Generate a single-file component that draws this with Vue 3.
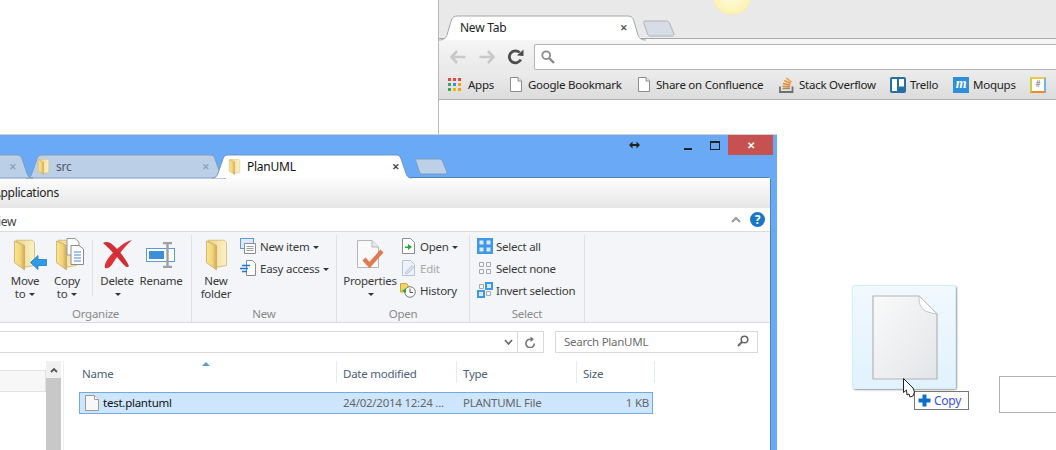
<script setup>
const bookmarks = [
  { label: 'Apps', icon: 'apps', width: 62 },
  { label: 'Google Bookmark', icon: 'page', width: 128 },
  { label: 'Share on Confluence', icon: 'page', width: 141 },
  { label: 'Stack Overflow', icon: 'so', width: 111 },
  { label: 'Trello', icon: 'trello', width: 63 },
  { label: 'Moqups', icon: 'moqups', width: 77 },
  { label: '', icon: 'hash', width: 20 }
]

const appColors = ['#e8453c', '#e8453c', '#e8453c', '#3ba55c', '#3b8be7', '#f4a400', '#3ba55c', '#f4b400', '#f4a400']

const columns = [
  { label: 'Name', width: 254 },
  { label: 'Date modified', width: 120 },
  { label: 'Type', width: 120 },
  { label: 'Size', width: 79 }
]
</script>

<template>
  <div class="desktop">
    <svg class="defs" width="0" height="0">
      <defs>
        <linearGradient id="folderBack" x1="0" y1="0" x2="1" y2="0">
          <stop offset="0" stop-color="#e9cf84" />
          <stop offset="0.5" stop-color="#f4e3a6" />
          <stop offset="1" stop-color="#fbf1c6" />
        </linearGradient>
        <linearGradient id="folderFront" x1="0" y1="0" x2="1" y2="0">
          <stop offset="0" stop-color="#fbe691" />
          <stop offset="0.6" stop-color="#f2d27a" />
          <stop offset="1" stop-color="#cfa95a" />
        </linearGradient>
        <linearGradient id="ghostPage" x1="0" y1="0" x2="1" y2="1">
          <stop offset="0" stop-color="#fafafa" />
          <stop offset="1" stop-color="#e2e5e8" />
        </linearGradient>
        <symbol id="folder" viewBox="0 0 22 32">
          <path d="M2 0.500 H19 L21.500 3 V27 L10 29 Z" fill="url(#folderBack)" stroke="#cdb26a" stroke-width="0.800" />
          <path d="M0.500 1.500 L11 6 V31.500 L0.500 24 Z" fill="url(#folderFront)" stroke="#c8a75c" stroke-width="0.800" />
        </symbol>
        <symbol id="page" viewBox="0 0 12 15">
          <path d="M0.500 0.500 H8 L11.500 4 V14.500 H0.500 Z" fill="#fff" stroke="#8d8d8d" />
          <path d="M8 0.500 V4 H11.500" fill="#eee" stroke="#8d8d8d" />
        </symbol>
      </defs>
    </svg>

    <section class="chrome">
      <div class="chrome-top">
        <div class="chrome-tab">
          <svg class="tab-shape" viewBox="0 0 200 25" preserveAspectRatio="none">
            <path d="M0 25 C5 25 7 23 8 19 L12 5 C13 2 15 1 18 1 H182 C185 1 187 2 188 5 L192 19 C193 23 195 25 200 25" fill="#fff" stroke="#a5a5a5" vector-effect="non-scaling-stroke" />
          </svg>
          <span class="chrome-tab-title">New Tab</span>
          <span class="chrome-close">✕</span>
        </div>
        <svg class="chrome-newtab" width="32" height="17" viewBox="0 0 32 17">
          <path d="M1.500 1 H23 C25 1 26 2 26.500 3 L31 14 C31 15.500 30 16 29 16 H7 C6 16 5 15 4.500 14 L0.800 3 C0.500 2 1 1 1.500 1 Z" fill="#d6dde6" stroke="#b2b2b2" />
        </svg>
      </div>
      <div class="chrome-toolbar">
        <svg class="nav" width="16" height="14" viewBox="0 0 16 14"><path d="M7 1 L1.500 7 L7 13 M2 7 H15.500" fill="none" stroke="#c9c9c9" stroke-width="2.600" /></svg>
        <svg class="nav" width="16" height="14" viewBox="0 0 16 14"><path d="M9 1 L14.500 7 L9 13 M14 7 H0.500" fill="none" stroke="#c9c9c9" stroke-width="2.600" /></svg>
        <svg class="nav" width="16" height="16" viewBox="0 0 16 16"><path d="M12.800 10.500 A6 6 0 1 1 11.600 3.600" fill="none" stroke="#4c4c4c" stroke-width="2.800" /><path d="M9 6.500 L15.500 7 V0.500 Z" fill="#4c4c4c" /></svg>
        <div class="omnibox">
          <svg width="14" height="14" viewBox="0 0 14 14"><circle cx="5.200" cy="5.200" r="3.900" fill="none" stroke="#8a8a8a" stroke-width="1.800" /><path d="M8 8 L13 13" stroke="#8a8a8a" stroke-width="2.400" /></svg>
        </div>
      </div>
      <div class="bookmarks">
        <div v-for="b in bookmarks" :key="b.icon + b.label" class="bookmark" :style="{ width: b.width + 'px' }">
          <span class="bm-icon" :class="{ 'bm-page': b.icon === 'page' }">
            <span v-if="b.icon === 'apps'" class="apps-grid">
              <i v-for="(c, i) in appColors" :key="i" :style="{ background: c }"></i>
            </span>
            <svg v-else-if="b.icon === 'page'" width="12" height="15"><use href="#page" /></svg>
            <svg v-else-if="b.icon === 'so'" width="15" height="16" viewBox="0 0 15 16">
              <path d="M1 9.500 V15 H13.500 V9.500" fill="none" stroke="#6f6f6f" stroke-width="1.800" />
              <path d="M3.500 11.500 H11" stroke="#a98a5f" stroke-width="1.400" />
              <path d="M3.600 9.200 L11 10" stroke="#d98a3c" stroke-width="1.400" />
              <path d="M4 6.500 L11.200 8.200" stroke="#e8812a" stroke-width="1.400" />
              <path d="M5.200 3.600 L11.800 6.500" stroke="#f08a24" stroke-width="1.400" />
              <path d="M7.200 1 L12.500 5" stroke="#f39a2c" stroke-width="1.400" />
            </svg>
            <svg v-else-if="b.icon === 'trello'" width="16" height="16" viewBox="0 0 16 16">
              <rect width="16" height="16" rx="2" fill="#26709f" />
              <rect x="2" y="2" width="5" height="12" fill="#fff" />
              <rect x="9" y="2" width="5" height="7.500" fill="#fff" />
            </svg>
            <span v-else-if="b.icon === 'moqups'" class="moqups">m</span>
            <span v-else class="hash">#</span>
          </span>
          <span v-if="b.label" class="bm-label">{{ b.label }}</span>
        </div>
      </div>
    </section>

    <div class="sun"></div>

    <section class="explorer">
      <div class="ex-tabs">
        <div class="ex-tab behind first">
          <svg class="tab-shape" viewBox="0 0 200 24" preserveAspectRatio="none">
            <path d="M0 24 C4 24 5 22 6 19 L11 4 C12 1 13 0 16 0 H184 C187 0 188 1 189 4 L194 19 C195 22 196 24 200 24 Z" fill="#bbcfe6" stroke="#7f9cc0" vector-effect="non-scaling-stroke" />
          </svg>
          <span class="ex-close">✕</span>
        </div>
        <div class="ex-tab behind second">
          <svg class="tab-shape" viewBox="0 0 200 24" preserveAspectRatio="none">
            <path d="M0 24 C4 24 5 22 6 19 L11 4 C12 1 13 0 16 0 H184 C187 0 188 1 189 4 L194 19 C195 22 196 24 200 24 Z" fill="#bbcfe6" stroke="#7f9cc0" vector-effect="non-scaling-stroke" />
          </svg>
          <svg class="tab-folder" width="13" height="16"><use href="#folder" /></svg>
          <span class="ex-title">src</span>
          <span class="ex-close">✕</span>
        </div>
        <div class="ex-tab active">
          <svg class="tab-shape" viewBox="0 0 200 24" preserveAspectRatio="none">
            <path d="M0 24 C4 24 5 22 6 19 L11 4 C12 1 13 0 16 0 H184 C187 0 188 1 189 4 L194 19 C195 22 196 24 200 24" fill="#fff" stroke="#6a97cc" vector-effect="non-scaling-stroke" />
          </svg>
          <svg class="tab-folder" width="13" height="16"><use href="#folder" /></svg>
          <span class="ex-title">PlanUML</span>
          <span class="ex-close">✕</span>
        </div>
        <svg class="ex-newtab" width="33" height="17" viewBox="0 0 33 17">
          <path d="M1.500 1 H24 C26 1 27 2 27.500 3 L32 14 C32 15.500 31 16 30 16 H7 C6 16 5 15 4.500 14 L0.800 3 C0.500 2 1 1 1.500 1 Z" fill="#bcd0e8" stroke="#7f9cc0" />
        </svg>
        <div class="ex-controls">
          <svg class="resize" width="11" height="8" viewBox="0 0 11 8"><path d="M0 4 L3.500 0.500 V3 H7.500 V0.500 L11 4 L7.500 7.500 V5 H3.500 V7.500 Z" fill="#222" /></svg>
          <span class="min"></span>
          <span class="max"></span>
          <span class="close">✕</span>
        </div>
      </div>

      <div class="ex-inner">
        <div class="menu-bar">Applications</div>
        <div class="view-row">
          <span class="view-label">View</span>
          <svg class="caret-up" width="10" height="7" viewBox="0 0 10 7"><path d="M1 6 L5 2 L9 6" fill="none" stroke="#9a9a9a" stroke-width="2" /></svg>
          <span class="help">?</span>
        </div>

        <div class="ribbon">
          <div class="group organize">
            <div class="group-body">
              <div class="big w42">
                <span class="big-icon">
                  <svg class="big-folder" width="21" height="32"><use href="#folder" /></svg>
                  <svg class="over-arrow" width="17" height="15" viewBox="0 0 17 15"><path d="M0.500 7.500 L8 0.500 V4.500 H16.500 V10.500 H8 V14.500 Z" fill="#2e9bea" stroke="#1c78c4" stroke-width="0.800" /></svg>
                </span>
                <span>Move</span>
                <span>to <i class="arrow"></i></span>
              </div>
              <div class="big w42">
                <span class="big-icon">
                  <svg class="big-folder" width="21" height="32"><use href="#folder" /></svg>
                  <svg class="over-doc" width="18" height="27" viewBox="0 0 18 27">
                    <path d="M1 0.500 H9 L13 4 V17 H1 Z" fill="#fff" stroke="#9a9a9a" />
                    <path d="M5 7.500 H13 L17.500 11 V26.500 H5 Z" fill="#fff" stroke="#8a8a8a" />
                    <path d="M8 14 H15 M8 17 H15 M8 20 H15 M8 23 H15" stroke="#4a86c8" />
                  </svg>
                </span>
                <span>Copy</span>
                <span>to <i class="arrow"></i></span>
              </div>
              <div class="sep"></div>
              <div class="big w42">
                <span class="big-icon">
                  <svg width="30" height="29" viewBox="0 0 30 29">
                    <path d="M30 0 C22 2 14 9 8 16 C4 21 2 25 3 28 C7 29 9 26 11 23 C15 17 22 7 30 0 Z" fill="#d8343a" />
                    <path d="M1 3 C4 1 8 2 11 5 C16 10 23 17 27 26 C26 28 24 27 22 25 C16 18 8 9 1 3 Z" fill="#cf2f35" />
                  </svg>
                </span>
                <span>Delete</span>
                <span><i class="arrow"></i></span>
              </div>
              <div class="big w46">
                <span class="big-icon">
                  <svg width="30" height="26" viewBox="0 0 30 26">
                    <rect x="0.500" y="6.500" width="28" height="13" fill="#fff" stroke="#5a9bd5" />
                    <rect x="3" y="9" width="15" height="8" fill="#3d8fdc" />
                    <path d="M17 1 H26 M17 25 H26 M21.500 1 V25" stroke="#a0a0a0" stroke-width="2.400" fill="none" />
                  </svg>
                </span>
                <span>Rename</span>
              </div>
            </div>
            <div class="group-label">Organize</div>
          </div>

          <div class="group new">
            <div class="group-body">
              <div class="big w48">
                <span class="big-icon">
                  <svg width="21" height="32"><use href="#folder" /></svg>
                </span>
                <span>New</span>
                <span>folder</span>
              </div>
              <div class="small-col">
                <div class="small">
                  <svg width="16" height="16" viewBox="0 0 16 16">
                    <rect x="0.500" y="0.500" width="13" height="10" fill="#dceafa" stroke="#5a9bd5" />
                    <path d="M4.500 5.500 H15.500 V15.500 H4.500 Z" fill="#fff" stroke="#8d8d8d" />
                    <path d="M6.500 8.500 H13.500 M6.500 10.500 H13.500 M6.500 12.500 H13.500" stroke="#9a9a9a" />
                  </svg>
                  <span>New item <i class="arrow"></i></span>
                </div>
                <div class="small">
                  <svg width="16" height="16" viewBox="0 0 16 16">
                    <path d="M6.500 0.500 H12.500 L15.500 3.500 V15.500 H6.500 Z" fill="#fff" stroke="#8d8d8d" />
                    <path d="M2 5.500 H10 M0 8.500 H8 M2 11.500 H7" stroke="#1e78d6" stroke-width="1.300" />
                  </svg>
                  <span>Easy access <i class="arrow"></i></span>
                </div>
              </div>
            </div>
            <div class="group-label">New</div>
          </div>

          <div class="group open">
            <div class="group-body">
              <div class="big w60">
                <span class="big-icon">
                  <svg width="28" height="30" viewBox="0 0 28 30">
                    <path d="M1.500 0.500 H16 L22.500 7 V27.500 H1.500 Z" fill="#f9f9f9" stroke="#b5b5b5" />
                    <path d="M16 0.500 V7 H22.500" fill="#e8e8e8" stroke="#b5b5b5" />
                    <path d="M8 19 L13.500 25 L26 11" fill="none" stroke="#e07b50" stroke-width="4.200" />
                  </svg>
                </span>
                <span>Properties</span>
                <span><i class="arrow"></i></span>
              </div>
              <div class="small-col">
                <div class="small">
                  <svg width="16" height="16" viewBox="0 0 16 16">
                    <path d="M2.500 0.500 H10.500 L14.500 4.500 V15.500 H2.500 Z" fill="#fff" stroke="#8d8d8d" />
                    <path d="M5 8.500 H8 V6 L12 9 L8 12 V10 H5 Z" fill="#2aa838" />
                  </svg>
                  <span>Open <i class="arrow"></i></span>
                </div>
                <div class="small muted">
                  <svg width="16" height="16" viewBox="0 0 16 16">
                    <path d="M2.500 0.500 H10.500 L14.500 4.500 V15.500 H2.500 Z" fill="#eef3fa" stroke="#b4c4da" />
                    <path d="M5 13 L12 5.500 L14 7.500 L7 14 Z" fill="#d8e2ee" stroke="#a4b6cc" stroke-width="0.700" />
                  </svg>
                  <span>Edit</span>
                </div>
                <div class="small">
                  <svg width="16" height="16" viewBox="0 0 16 16">
                    <path d="M0.500 1.500 H6 L8 3 V10 H0.500 Z" fill="#f2d55e" stroke="#c2a842" />
                    <circle cx="10" cy="10" r="5.300" fill="#fff" stroke="#7a7a7a" />
                    <path d="M10 6.500 V10.500 H13" fill="none" stroke="#555" />
                    <path d="M2 8.500 L6 6.500 V11 Z" fill="#2aa838" />
                  </svg>
                  <span>History</span>
                </div>
              </div>
            </div>
            <div class="group-label">Open</div>
          </div>

          <div class="group select">
            <div class="group-body">
              <div class="small-col wide">
                <div class="small">
                  <svg width="16" height="16" viewBox="0 0 16 16">
                    <rect width="16" height="16" fill="#3f97e8" />
                    <path d="M2.500 2.500 H6.500 V6.500 H2.500 Z M9.500 2.500 H13.500 V6.500 H9.500 Z M2.500 9.500 H6.500 V13.500 H2.500 Z M9.500 9.500 H13.500 V13.500 H9.500 Z" fill="#d9ecfb" />
                  </svg>
                  <span>Select all</span>
                </div>
                <div class="small">
                  <svg width="16" height="16" viewBox="0 0 16 16">
                    <path d="M2.500 2.500 H6.500 V6.500 H2.500 Z M9.500 2.500 H13.500 V6.500 H9.500 Z M2.500 9.500 H6.500 V13.500 H2.500 Z M9.500 9.500 H13.500 V13.500 H9.500 Z" fill="none" stroke="#a8a8a8" />
                  </svg>
                  <span>Select none</span>
                </div>
                <div class="small">
                  <svg width="16" height="16" viewBox="0 0 16 16">
                    <path d="M2.500 2.500 H6.500 V6.500 H2.500 Z M9.500 9.500 H13.500 V13.500 H9.500 Z" fill="none" stroke="#a8a8a8" />
                    <path d="M8 0 H16 V8 H8 Z M0 8 H8 V16 H0 Z" fill="#3f97e8" />
                    <path d="M10 2 H14 V6 H10 Z M2 10 H6 V14 H2 Z" fill="#d9ecfb" />
                  </svg>
                  <span>Invert selection</span>
                </div>
              </div>
            </div>
            <div class="group-label">Select</div>
          </div>
        </div>

        <div class="address-row">
          <div class="address">
            <svg class="addr-down" width="9" height="6" viewBox="0 0 9 6"><path d="M1 1 L4.500 5 L8 1" fill="none" stroke="#666" stroke-width="1.600" /></svg>
            <span class="addr-refresh">
              <svg width="11" height="12" viewBox="0 0 11 12"><path d="M9.300 7.500 A4.200 4.200 0 1 1 6 3.300" fill="none" stroke="#777" stroke-width="1.600" /><path d="M5.500 0.500 L9 3.300 L5.500 6 Z" fill="#777" /></svg>
            </span>
          </div>
          <div class="search">
            <span>Search PlanUML</span>
            <svg width="12" height="12" viewBox="0 0 12 12"><circle cx="7.500" cy="4.500" r="3.300" fill="none" stroke="#666" stroke-width="1.500" /><path d="M5 7 L1 11" stroke="#666" stroke-width="2" /></svg>
          </div>
        </div>

        <div class="content">
          <div class="nav-pane">
            <div class="nav-tree"><div class="nav-item"></div></div>
            <div class="scrollbar">
              <div class="scroll-btn">
                <svg width="8" height="6" viewBox="0 0 8 6"><path d="M1 5 L4 2 L7 5" fill="none" stroke="#555" stroke-width="1.800" /></svg>
              </div>
              <div class="scroll-thumb"></div>
            </div>
          </div>
          <div class="list">
            <div class="list-head">
              <i class="sort"></i>
              <span v-for="c in columns" :key="c.label" class="col" :style="{ width: c.width + 'px' }">{{ c.label }}</span>
            </div>
            <div class="file-row">
              <span class="file-name">
                <svg width="14" height="16" viewBox="0 0 14 16">
                  <path d="M0.500 0.500 H9.500 L13.500 4.500 V15.500 H0.500 Z" fill="#f8f8f8" stroke="#9a9a9a" />
                  <path d="M9.500 0.500 V4.500 H13.500" fill="#fff" stroke="#9a9a9a" />
                </svg>
                test.plantuml
              </span>
              <span class="file-date">24/02/2014 12:24 ...</span>
              <span class="file-type">PLANTUML File</span>
              <span class="file-size">1 KB</span>
            </div>
          </div>
        </div>
      </div>
    </section>

    <div class="ghost">
      <svg width="66" height="85" viewBox="0 0 66 85">
        <path d="M1 1 H47 L65 19 V84 H1 Z" fill="url(#ghostPage)" stroke="#b4b4b4" stroke-width="1.200" />
        <path d="M47 1 C47 10 48 17 65 19 Z" fill="#fff" stroke="#c4c4c4" />
      </svg>
    </div>

    <div class="drop-box"></div>

    <div class="copy-tip">
      <svg width="13" height="13" viewBox="0 0 13 13"><path d="M4.500 0.500 H8.500 V4.500 H12.500 V8.500 H8.500 V12.500 H4.500 V8.500 H0.500 V4.500 H4.500 Z" fill="#0d6fc9" /></svg>
      <span>Copy</span>
    </div>

    <svg class="cursor" width="13" height="20" viewBox="0 0 13 20">
      <path d="M0.500 0.500 V14.500 L3.500 12 L4 17 L6 16 L7 19 L10 18 L11.500 14 L10 10 Z" fill="#fff" stroke="#222" />
    </svg>
  </div>
</template>

<style>
html, body {
  margin: 0;
  overflow: hidden;
  background: #fff;
}
</style>

<style scoped>
.desktop {
  position: relative;
  width: 1056px;
  height: 450px;
  overflow: hidden;
  background: #fff;
  font-family: "Noto Sans", "Open Sans", sans-serif;
  font-size: 11.5px;
  letter-spacing: -0.25px;
  color: #333;
}

.defs {
  position: absolute;
}

.tab-shape {
  position: absolute;
  left: 0;
  top: 0;
  width: 100%;
  height: 100%;
  overflow: visible;
}

/* browser window behind */
.chrome {
  position: absolute;
  left: 438px;
  top: 0;
  width: 640px;
  height: 134px;
  display: flex;
  flex-direction: column;
  border-left: 1px solid #b8b8b8;
  background: #fff;
}

.chrome-top {
  height: 39px;
  box-sizing: border-box;
  padding-top: 15px;
  display: flex;
  background: #e9e9e9;
  border-bottom: 1px solid #a9a9a9;
}

.chrome-tab {
  position: relative;
  width: 207px;
  height: 25px;
  display: flex;
  align-items: center;
  justify-content: space-between;
  padding: 0 18px 0 21px;
  box-sizing: border-box;
  font-size: 12px;
  color: #222;
}

.chrome-tab-title,
.chrome-close {
  position: relative;
}

.chrome-close {
  font-size: 9px;
  font-weight: 700;
  color: #555;
}

.chrome-newtab {
  margin: 5px 0 0 -3px;
}

.chrome-toolbar {
  height: 32px;
  box-sizing: border-box;
  display: flex;
  align-items: center;
  padding: 4px 0 0 11px;
  background: linear-gradient(#f6f6f6, #e9e9e9);
}

.nav {
  margin-right: 13px;
}

.omnibox {
  flex: 1;
  height: 26px;
  box-sizing: border-box;
  margin-left: -3px;
  padding: 5px 0 0 6px;
  background: #fff;
  border: 1px solid #b4b4b4;
  border-right: none;
  border-radius: 2px 0 0 2px;
}

.bookmarks {
  height: 29px;
  box-sizing: border-box;
  display: flex;
  align-items: center;
  padding: 0 0 1px 9px;
  background: linear-gradient(#ececec, #dcdcdc);
  border-bottom: 1px solid #aeaeae;
}

.bookmark {
  display: flex;
  align-items: center;
  flex: none;
  color: #222;
}

.bm-icon {
  display: flex;
  width: 20px;
  flex: none;
}

.bm-icon.bm-page {
  width: 18px;
}

.apps-grid {
  display: grid;
  grid-template-columns: repeat(3, 3px);
  gap: 2px;
}

.apps-grid i {
  width: 3px;
  height: 3px;
}

.moqups {
  width: 16px;
  height: 16px;
  background: #2f8fd8;
  color: #fff;
  font: italic 700 14px/14px "Liberation Serif", serif;
  text-align: center;
}

.hash {
  width: 12px;
  height: 12px;
  background: #fff;
  border: 2px solid #f2c84b;
  border-right-color: #6db3f2;
  border-bottom-color: #f08a24;
  border-left-color: #c9cf3d;
  color: #777;
  font-size: 8px;
  line-height: 10px;
  text-align: center;
}

.sun {
  position: absolute;
  left: 713px;
  top: -23px;
  width: 38px;
  height: 38px;
  border-radius: 50%;
  background: radial-gradient(circle at 50% 45%, #fffde8 0, #fdf3b4 65%, #ecdb98 100%);
}

/* file explorer window */
.explorer {
  position: absolute;
  left: 0;
  top: 134px;
  width: 777px;
  height: 316px;
  box-sizing: border-box;
  display: flex;
  flex-direction: column;
  background: #69a9f5;
  border-top: 1px solid #cfcfcf;
}

.ex-tabs {
  position: relative;
  height: 43px;
  flex: none;
  display: flex;
  align-items: flex-end;
}

.ex-tab {
  position: relative;
  flex: none;
  width: 200px;
  height: 23px;
  box-sizing: border-box;
  display: flex;
  align-items: center;
  padding: 0 16px 0 11px;
  margin-right: -14px;
}

.ex-tab.first {
  margin-left: -167px;
  margin-right: -7px;
  z-index: 2;
}

.ex-tab.second {
  z-index: 1;
}

.ex-tab.active {
  z-index: 3;
  color: #111;
  padding: 0 12px 0 16px;
  margin-right: 0;
}

.ex-tab.active .ex-close {
  color: #444;
}

.tab-folder {
  position: relative;
}

.ex-title {
  position: relative;
  margin-left: 6px;
  font-size: 12px;
}

.ex-tab.behind .ex-title {
  color: #556;
}

.ex-close {
  position: relative;
  margin-left: auto;
  font-size: 9px;
  font-weight: 700;
  color: #8fa3bd;
}

.ex-newtab {
  margin: 0 0 3px 3px;
}

.ex-controls {
  margin-left: auto;
  height: 20px;
  align-self: flex-start;
  display: flex;
  align-items: center;
  padding-right: 4px;
}

.resize {
  margin-right: 44px;
}

.min {
  width: 8px;
  height: 2px;
  margin: 7px 18px 0 0;
  background: #222;
}

.max {
  width: 8px;
  height: 6px;
  margin-right: 8px;
  border: 1px solid #222;
  border-top-width: 2px;
}

.close {
  width: 45px;
  height: 20px;
  background: #c75050;
  color: #fff;
  font-size: 10px;
  font-weight: 700;
  line-height: 20px;
  text-align: center;
}

.ex-inner {
  flex: 1;
  margin-right: 7px;
  display: flex;
  flex-direction: column;
  min-height: 0;
  background: #fff;
  border-top-right-radius: 3px;
  box-shadow: 1px 0 0 #4e80ba, 0 -1px 0 #4e80ba;
}

.menu-bar {
  height: 30px;
  box-sizing: border-box;
  padding-left: 0;
  line-height: 30px;
  text-indent: -7px;
  color: #222;
  font-size: 12px;
  background: linear-gradient(#fdfdfd, #e6e6e6);
}

.view-row {
  height: 23px;
  display: flex;
  align-items: center;
  padding-right: 5px;
  background: #fff;
}

.view-label {
  margin: 3px 0 0 -9px;
  font-size: 12px;
  color: #444;
}

.caret-up {
  margin-left: auto;
  margin-right: 9px;
}

.help {
  width: 15px;
  height: 15px;
  border-radius: 50%;
  background: #1a76c6;
  color: #fff;
  font-size: 12px;
  font-weight: 700;
  line-height: 15px;
  text-align: center;
}

.ribbon {
  height: 92px;
  flex: none;
  box-sizing: border-box;
  display: flex;
  background: #f3f5f8;
  border-top: 1px solid #dadbdc;
  border-bottom: 1px solid #dadbdc;
}

.group {
  flex: none;
  box-sizing: border-box;
  display: flex;
  flex-direction: column;
  margin-top: 3px;
  border-right: 1px solid #dfe1e4;
}

.organize {
  width: 192px;
}

.new {
  width: 145px;
}

.open {
  width: 133px;
}

.select {
  width: 115px;
}

.group-body {
  flex: 1;
  display: flex;
}

.group-label {
  height: 19px;
  line-height: 21px;
  text-align: center;
  color: #8a8a8a;
}

.organize .group-body {
  padding-left: 4px;
}

.open .group-body {
  padding-left: 3px;
}

.big {
  display: flex;
  flex-direction: column;
  align-items: center;
  flex: none;
  line-height: 13px;
  color: #3a3a3a;
}

.w42 {
  width: 42px;
}

.w46 {
  width: 46px;
}

.w48 {
  width: 48px;
}

.w60 {
  width: 60px;
}

.big-icon {
  position: relative;
  height: 39px;
  width: 100%;
  display: flex;
  justify-content: center;
  align-items: center;
  flex: none;
}

.big-folder {
  margin-right: 2px;
}

.over-arrow {
  position: absolute;
  left: 26px;
  top: 20px;
}

.over-doc {
  position: absolute;
  left: 20px;
  top: 3px;
}

.sep {
  width: 1px;
  height: 56px;
  margin: 5px 3px 0 4px;
  background: #dfe1e4;
}

.arrow {
  display: inline-block;
  width: 0;
  height: 0;
  margin-left: 1px;
  vertical-align: 2px;
  border: 3px solid transparent;
  border-top-color: #333;
  border-bottom: none;
}

.small-col {
  display: flex;
  flex-direction: column;
}

.small-col.wide {
  padding-left: 7px;
}

.small {
  height: 22px;
  display: flex;
  align-items: center;
  gap: 4px;
  white-space: nowrap;
  color: #3a3a3a;
}

.small-col.wide .small {
  gap: 3px;
}

.small.muted {
  color: #a8a8a8;
}

.address-row {
  height: 38px;
  box-sizing: border-box;
  flex: none;
  display: flex;
  padding-top: 8px;
  background: #fff;
}

.address {
  width: 544px;
  height: 22px;
  box-sizing: border-box;
  display: flex;
  justify-content: flex-end;
  align-items: center;
  border: 1px solid #d9d9d9;
  border-left: none;
}

.addr-down {
  margin-right: 4px;
}

.addr-refresh {
  width: 25px;
  height: 20px;
  display: flex;
  align-items: center;
  justify-content: center;
  border-left: 1px solid #d9d9d9;
}

.search {
  width: 203px;
  height: 22px;
  box-sizing: border-box;
  margin-left: 11px;
  padding: 0 8px 2px;
  display: flex;
  justify-content: space-between;
  align-items: center;
  border: 1px solid #d9d9d9;
  color: #6d6d6d;
}

.content {
  flex: 1;
  display: flex;
  min-height: 0;
}

.nav-pane {
  width: 63px;
  flex: none;
  display: flex;
  border-right: 1px solid #efefef;
}

.nav-tree {
  width: 46px;
  padding-top: 9px;
}

.nav-item {
  height: 20px;
  background: #f7f7f7;
  border: 1px solid #e2e2e2;
  border-left: none;
}

.scrollbar {
  width: 15px;
  background: #c8c8c8;
}

.scroll-btn {
  height: 17px;
  display: flex;
  align-items: center;
  justify-content: center;
  background: #f0f0f0;
}

.list {
  flex: 1;
  padding-left: 15px;
}

.list-head {
  position: relative;
  height: 22px;
  margin-bottom: 9px;
  display: flex;
  padding-left: 3px;
  line-height: 25px;
  color: #4c607a;
}

.sort {
  position: absolute;
  left: 123px;
  top: 1px;
  border: 4px solid transparent;
  border-top: none;
  border-bottom-color: #5a9bd5;
}

.col {
  flex: none;
  box-sizing: border-box;
  height: 22px;
  white-space: nowrap;
}

.col + .col {
  padding-left: 6px;
  border-left: 1px solid #e2ecf6;
}

.col:last-child {
  border-right: 1px solid #e2ecf6;
}

.file-row {
  width: 574px;
  height: 22px;
  box-sizing: border-box;
  display: flex;
  align-items: center;
  padding-bottom: 1px;
  background: #cde6fd;
  border: 1px solid #73a9e6;
  color: #666;
}

.file-name {
  width: 263px;
  padding-left: 5px;
  box-sizing: border-box;
  display: flex;
  align-items: center;
  gap: 4px;
  color: #111;
}

.file-date {
  width: 120px;
}

.file-type {
  flex: 1;
}

.file-size {
  padding-right: 3px;
}

/* drag ghost over the desktop */
.ghost {
  position: absolute;
  left: 852px;
  top: 285px;
  width: 104px;
  height: 104px;
  box-sizing: border-box;
  padding: 10px 0 0 20px;
  border-radius: 3px;
  background: linear-gradient(#f1f9fe, #e0f2fd);
  box-shadow: 1px 1px 2px #9a9a9a, inset 0 0 0 1px #d6eefb;
}

.ghost svg {
  display: block;
}

.drop-box {
  position: absolute;
  left: 999px;
  top: 376px;
  width: 80px;
  height: 35px;
  border: 1px solid #b0b0b0;
}

.copy-tip {
  position: absolute;
  left: 914px;
  top: 391px;
  width: 55px;
  height: 19px;
  box-sizing: border-box;
  display: flex;
  align-items: center;
  gap: 3px;
  padding-left: 3px;
  background: #fff;
  border: 1px solid #777;
  color: #3a4fe0;
  font-size: 12px;
}

.cursor {
  position: absolute;
  left: 903px;
  top: 378px;
}
</style>
